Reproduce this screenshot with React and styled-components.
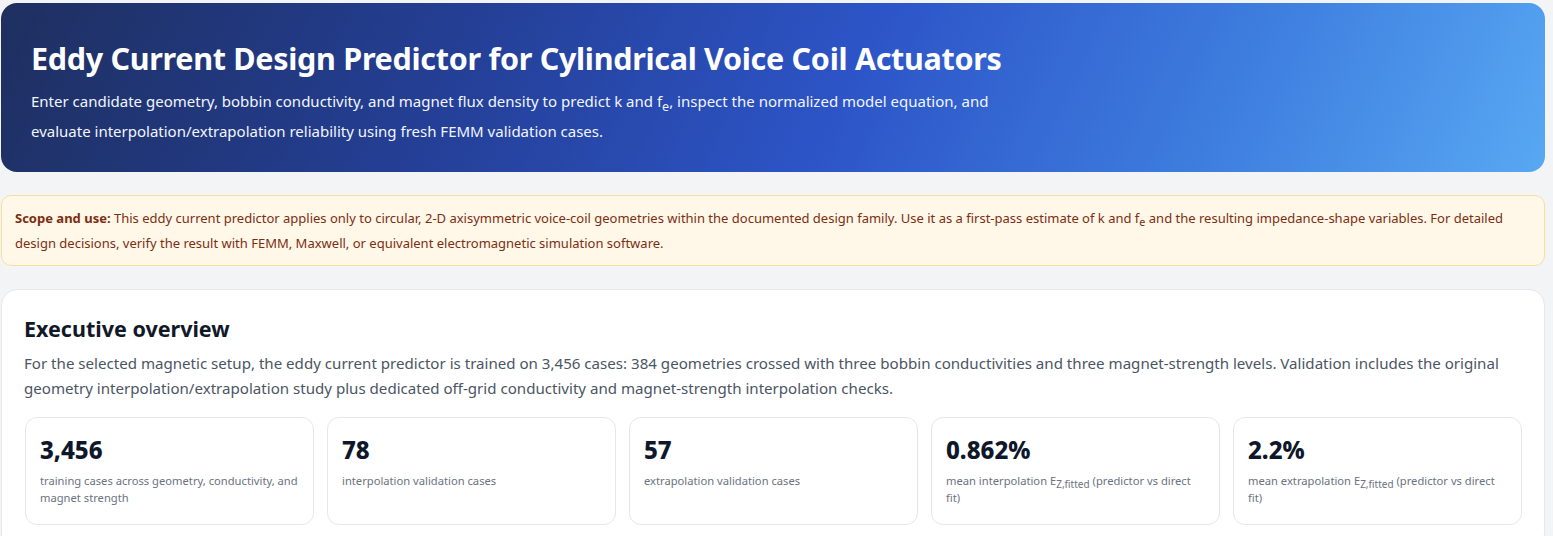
import React from "react";
import styled, { createGlobalStyle } from "styled-components";

const GlobalStyle = createGlobalStyle`
  * { box-sizing: border-box; }
  body {
    margin: 0;
    background: #f3f4f6;
    font-family: "Noto Sans", "Open Sans", Arial, sans-serif;
    color: #111827;
  }
  sub {
    line-height: 0;
    vertical-align: -0.3em;
  }
`;

const Page = styled.div`
  padding: 3px 8px 0 1px;
  display: flex;
  flex-direction: column;
  gap: 23px;
`;

const Hero = styled.header`
  border-radius: 16px;
  padding: 36px 30px 26px;
  color: #fff;
  background: linear-gradient(115deg, #1e2f5f 0%, #243f96 30%, #2d55c8 55%, #3f80e0 80%, #58a8f3 100%);
`;

const HeroTitle = styled.h1`
  margin: 0 0 9px;
  font-size: 30.5px;
  font-weight: 700;
  letter-spacing: -0.3px;
  line-height: 38px;
`;

const HeroText = styled.p`
  margin: 0;
  max-width: 980px;
  font-size: 15px;
  line-height: 30px;
  color: #f1f5ff;
`;

const Notice = styled.div`
  background: #fff8e8;
  border: 1px solid #f6df9e;
  border-radius: 10px;
  padding: 10px 14px 9px 13px;
  font-size: 13px;
  line-height: 25px;
  color: #7c2d12;

  strong { font-weight: 700; }
`;

const Panel = styled.section`
  background: #fff;
  border: 1px solid #e5e7eb;
  border-radius: 16px;
  padding: 24px 22px 24px;
`;

const PanelTitle = styled.h2`
  margin: 0 0 8px;
  font-size: 21.5px;
  font-weight: 700;
  color: #111827;
`;

const PanelText = styled.p`
  margin: 0 0 16px;
  font-size: 15.1px;
  line-height: 25px;
  color: #4b5563;
`;

const StatGrid = styled.div`
  display: grid;
  grid-template-columns: repeat(5, 1fr);
  gap: 13px;
  padding-left: 1px;
`;

const StatCard = styled.div`
  border: 1px solid #e5e7eb;
  border-radius: 12px;
  padding: 16px 13px 18px 14px;
  min-height: 104px;
`;

const StatValue = styled.div`
  font-size: 24px;
  font-weight: 800;
  color: #0f172a;
  line-height: 32px;
  margin-bottom: 6px;
`;

const StatLabel = styled.div`
  font-size: 11.2px;
  line-height: 17px;
  color: #6b7280;

  sub { font-size: 10px; }
`;

const stats = [
  { value: "3,456", label: <>training cases across geometry, conductivity, and magnet strength</> },
  { value: "78", label: <>interpolation validation cases</> },
  { value: "57", label: <>extrapolation validation cases</> },
  { value: "0.862%", label: <>mean interpolation E<sub>Z,fitted</sub> (predictor vs direct fit)</> },
  { value: "2.2%", label: <>mean extrapolation E<sub>Z,fitted</sub> (predictor vs direct fit)</> },
];

export default function App() {
  return (
    <>
      <GlobalStyle />
      <Page>
        <Hero>
          <HeroTitle>Eddy Current Design Predictor for Cylindrical Voice Coil Actuators</HeroTitle>
          <HeroText>
            Enter candidate geometry, bobbin conductivity, and magnet flux density to predict k and f<sub>e</sub>, inspect the
            normalized model equation, and evaluate interpolation/extrapolation reliability using fresh FEMM validation cases.
          </HeroText>
        </Hero>

        <Notice>
          <strong>Scope and use:</strong> This eddy current predictor applies only to circular, 2-D axisymmetric voice-coil
          geometries within the documented design family. Use it as a first-pass estimate of k and f<sub>e</sub> and the
          resulting impedance-shape variables. For detailed design decisions, verify the result with FEMM, Maxwell, or
          equivalent electromagnetic simulation software.
        </Notice>

        <Panel>
          <PanelTitle>Executive overview</PanelTitle>
          <PanelText>
            For the selected magnetic setup, the eddy current predictor is trained on 3,456 cases: 384 geometries crossed with
            three bobbin conductivities and three magnet-strength levels. Validation includes the original geometry
            interpolation/extrapolation study plus dedicated off-grid conductivity and magnet-strength interpolation checks.
          </PanelText>
          <StatGrid>
            {stats.map((s, i) => (
              <StatCard key={i}>
                <StatValue>{s.value}</StatValue>
                <StatLabel>{s.label}</StatLabel>
              </StatCard>
            ))}
          </StatGrid>
        </Panel>
      </Page>
    </>
  );
}
